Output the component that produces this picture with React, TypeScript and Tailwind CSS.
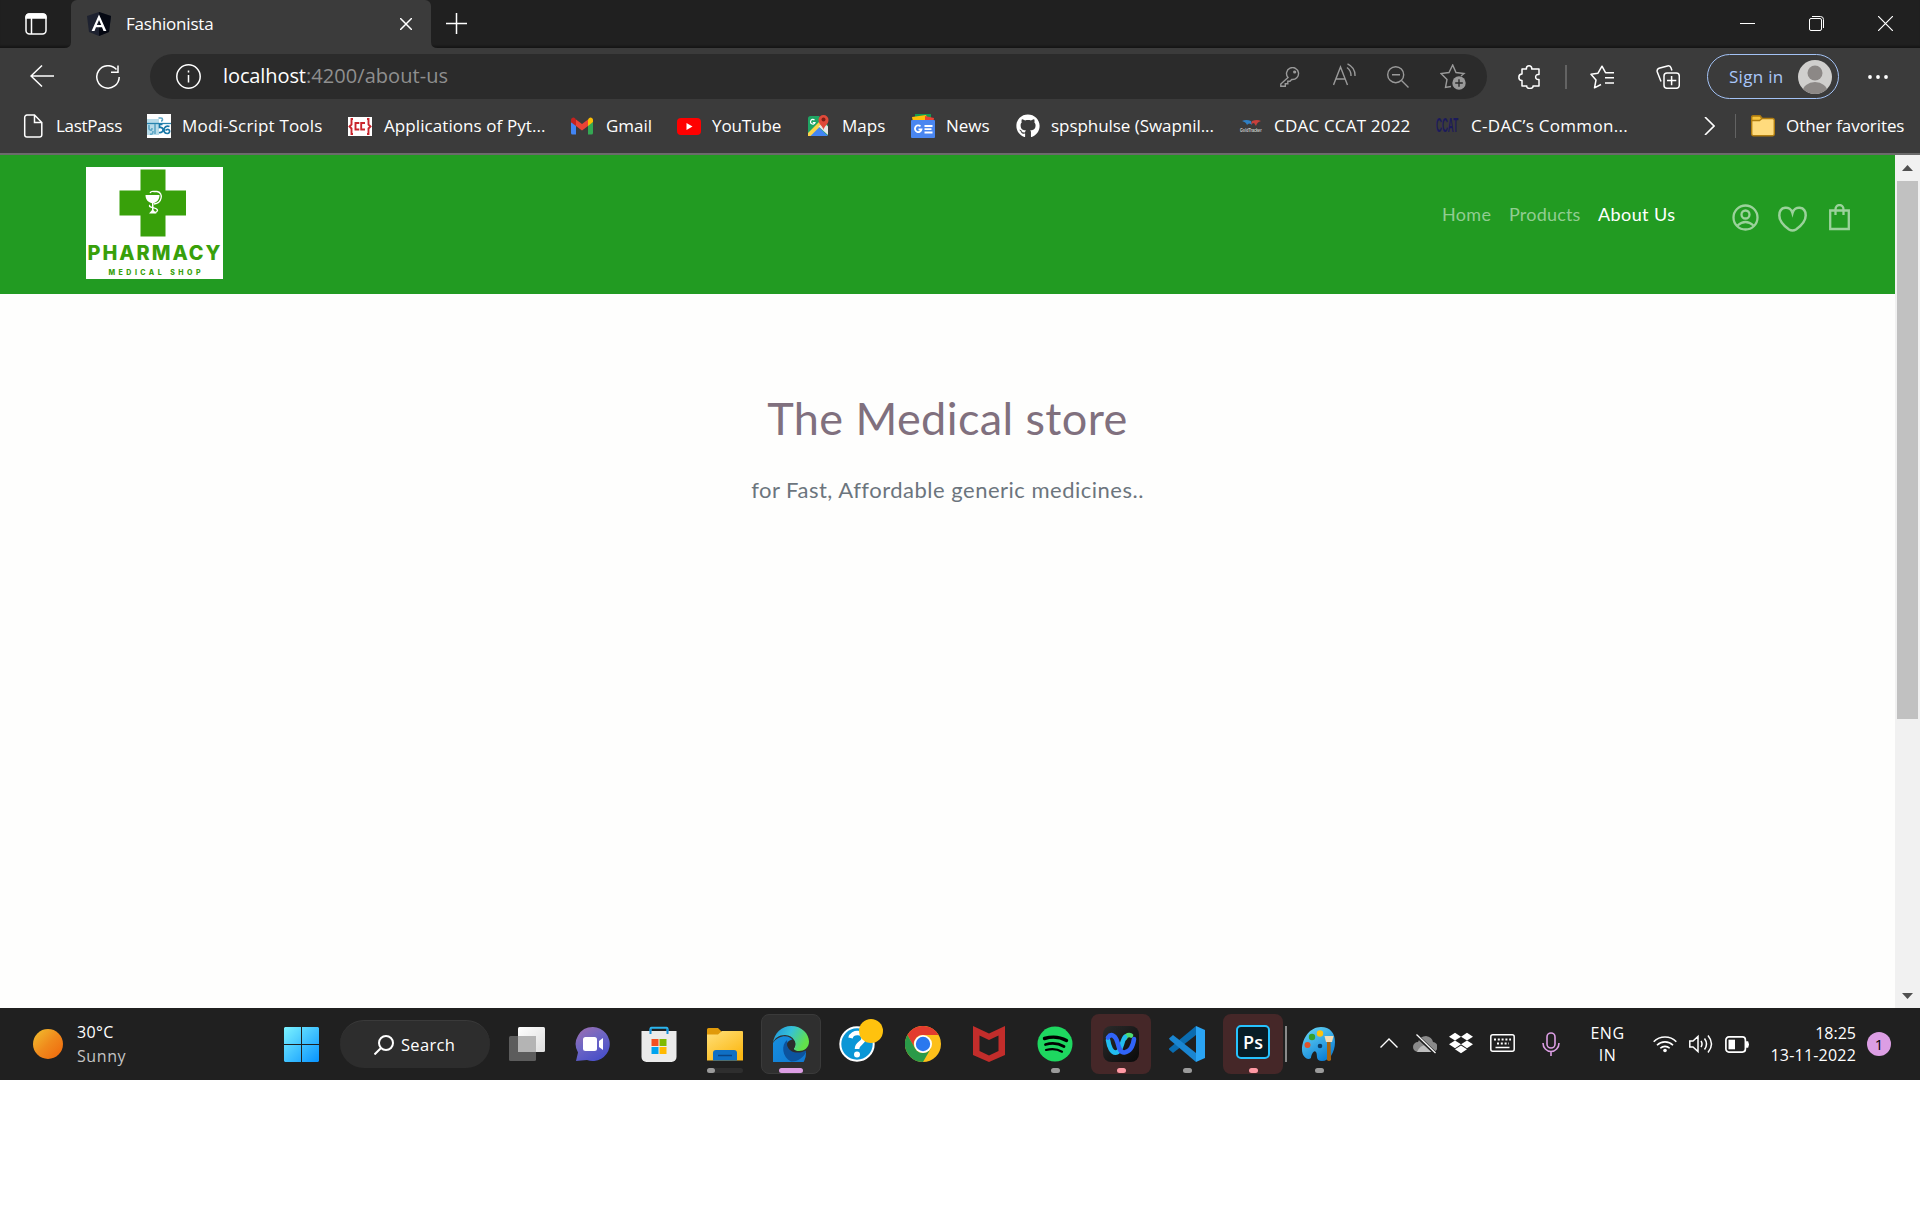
import { type ReactNode } from "react";
import { FaGithub, FaDropbox } from "react-icons/fa";

function Label({ children, className = "" }: { children: ReactNode; className?: string }) {
  return <span className={"block shrink-0 whitespace-nowrap " + className}>{children}</span>;
}

function TabStrip() {
  return (
    <div className="flex h-12 items-start bg-[#202020] shadow-[inset_0_-3px_2px_-1px_#161616]">
      <svg className="mt-[13px] ml-[25px] size-[22px] shrink-0" viewBox="0 0 22 22" fill="none" stroke="#fff" strokeWidth="1.5">
        <rect x="1" y="1" width="20" height="20" rx="3.5" />
        <path d="M1 5V4a3 3 0 0 1 3-3h14a3 3 0 0 1 3 3v1z" fill="#fff" />
        <path d="M6.500 5v16" />
      </svg>
      <svg className="ml-[17px] h-12 w-[7px] shrink-0" viewBox="0 0 7 48"><path d="M7 0v48H0q7 0 7-6z" fill="#3b3b3b" /></svg>
      <div className="flex h-12 w-[360px] shrink-0 items-center rounded-t-md bg-[#3b3b3b]">
        <svg className="ml-4 h-6 w-6 shrink-0" viewBox="0 0 24 24">
          <path d="M12 0 24 4l-2 16-10 4L2 20 0 4z" fill="#1e2230" />
          <path d="M12 0 24 4l-2 16-10 4z" fill="#050812" />
          <path d="M12 2.500 4.600 19h2.900l1.500-3.700h6L16.500 19h2.900zm0 5.500 2.200 5h-4.400z" fill="#fff" fillRule="evenodd" />
        </svg>
        <Label className="ml-[15px] w-[88px] text-[17px] tracking-[-0.2px] text-white">Fashionista</Label>
        <svg className="ml-[186px] size-3 shrink-0" viewBox="0 0 12 12" stroke="#fff" strokeWidth="1.500"><path d="M0 0l12 12M12 0 0 12" /></svg>
      </div>
      <svg className="h-12 w-[7px] shrink-0" viewBox="0 0 7 48"><path d="M0 0v48h7q-7 0-7-6z" fill="#3b3b3b" /></svg>
      <svg className="mt-[13px] ml-2 size-[21px] shrink-0" viewBox="0 0 21 21" stroke="#fff" strokeWidth="1.500"><path d="M0 10.500h21M10.500 0v21" /></svg>
      <div className="ml-auto flex items-center gap-[54px] pt-4 pr-[27px]">
        <svg className="size-[15px]" viewBox="0 0 15 15" stroke="#fff"><path d="M0 7.500h15" /></svg>
        <svg className="size-[15px]" viewBox="0 0 15 15" fill="none" stroke="#fff"><rect x=".5" y="2.500" width="12" height="12" rx="1.500" /><path d="M3 .5h8.500a3 3 0 0 1 3 3V12" /></svg>
        <svg className="size-[15px]" viewBox="0 0 15 15" stroke="#fff" strokeWidth="1.200"><path d="M0 0l15 15M15 0 0 15" /></svg>
      </div>
    </div>
  );
}

function Toolbar() {
  return (
    <div className="flex h-[57px] items-center">
      <svg className="mb-px ml-[30px] h-[22px] w-6 shrink-0" viewBox="0 0 24 22" fill="none" stroke="#fff" strokeWidth="1.500"><path d="M24 11H1M12 .5 1 11l11 10.500" /></svg>
      <svg className="ml-[42px] h-6 w-6 shrink-0" viewBox="0 0 24 24" fill="none" stroke="#fff" strokeWidth="1.500"><path d="M20.500 4.600A11.200 11.200 0 1 0 23.200 12M22 .5v6.800h-7" /></svg>
      <div className="ml-[30px] flex h-[45px] w-[1337px] shrink-0 items-center rounded-full bg-[#2b2b2b]">
        <svg className="ml-[26px] size-[25px] shrink-0" viewBox="0 0 25 25" fill="none" stroke="#fff" strokeWidth="1.500"><circle cx="12.500" cy="12.500" r="11.700" /><path d="M12.500 11v7.500M12.500 6.500v2" /></svg>
        <Label className="mb-0.5 ml-[22px] w-[83px] text-[20px] tracking-[-0.1px] text-white">localhost</Label>
        <Label className="mb-0.5 w-[142px] text-[20px] tracking-[0.05px] text-[#8f8f8f]">:4200/about-us</Label>
        <svg className="ml-[832px] size-5 shrink-0" viewBox="0 0 20 20" fill="none" stroke="#9a9a9a" strokeWidth="1.400"><path d="M8 10.500.8 17v2.300h4.500v-2.500h2.500v-2.500H10l1.700-1.800A6 6 0 1 0 8 10.500z" /><circle cx="14.700" cy="5" r=".9" fill="#9a9a9a" /></svg>
        <svg className="mb-1 ml-[33px] h-6 w-[23px] shrink-0" viewBox="0 0 23 24" fill="none" stroke="#9a9a9a" strokeWidth="1.400"><path d="M.5 22 7.500 4l7 18M3 16h9.500M14 4.500A10 10 0 0 1 18 13M14.500.8A13 13 0 0 1 22 13" /></svg>
        <svg className="ml-[31px] size-[22px] shrink-0" viewBox="0 0 22 22" fill="none" stroke="#9a9a9a" strokeWidth="1.400"><circle cx="8.700" cy="8.700" r="8" /><path d="M14.500 14.500 21.500 21.500M5 8.700h8" /></svg>
        <svg className="ml-[31px] h-[26px] w-[27px] shrink-0" viewBox="0 0 27 26" fill="none" stroke="#9a9a9a" strokeWidth="1.400"><path d="M11 22.500 5.500 23.500 7 15.500 1 9.500l8-1 3.700-7.500L16 8.500l8 1-3 2.500" /><circle cx="19" cy="19" r="6.700" fill="#9a9a9a" stroke="none" /><path d="M19 15.200v7.600M15.200 19h7.600" stroke="#2b2b2b" /></svg>
      </div>
      <svg className="ml-[31px] h-6 w-[23px] shrink-0" viewBox="0 0 23 24" fill="none" stroke="#fff" strokeWidth="1.500"><path d="M4 4h4.500C7.500-.2 14.500-.2 13.700 4H21v5.500c-4.500-1-4.500 6 0 5V21h-6c.6 3.300-7 3.300-6.200 0H4v-5.500c-4.200 0-4.200-6.500 0-6.500z" strokeLinejoin="round" /></svg>
      <div className="ml-6 h-6 w-0.5 shrink-0 bg-[#636363]" />
      <svg className="ml-[23px] h-6 w-6 shrink-0" viewBox="0 0 24 24" fill="none" stroke="#fff" strokeWidth="1.500" strokeLinejoin="round"><path d="M11 19.500 4.500 22.800 6 15 1 9.200l7-1L12 1.200l3.500 6.500H24M15 12.800h9M15 18h9" /></svg>
      <svg className="ml-[42px] h-6 w-6 shrink-0" viewBox="0 0 24 24" fill="none" stroke="#fff" strokeWidth="1.500"><path d="M5 16.500 1.300 7A3 3 0 0 1 3 3.300L11.500 1a3 3 0 0 1 3.600 2l.8 2.500" /><rect x="8" y="8" width="15.300" height="15.300" rx="3" /><path d="M15.600 11v9.300M11 15.600h9.300" /></svg>
      <div className="ml-[27px] flex h-[45px] w-[132px] shrink-0 items-center rounded-full border-[1.500px] border-[#a3c2f5]">
        <Label className="ml-[21px] w-[55px] text-[17px] tracking-[0.3px] text-[#a9c7fa]">Sign in</Label>
        <svg className="ml-[14px] size-[34px] shrink-0" viewBox="0 0 34 34"><clipPath id="av"><circle cx="17" cy="17" r="17" /></clipPath><g clipPath="url(#av)"><rect width="34" height="34" fill="#d0cfcd" /><circle cx="17" cy="13" r="7.500" fill="#8c8886" /><ellipse cx="17" cy="32" rx="12.500" ry="10" fill="#8c8886" /></g></svg>
      </div>
      <svg className="ml-[29px] h-1 w-5 shrink-0" viewBox="0 0 20 4" fill="#fff"><circle cx="2" cy="2" r="1.900" /><circle cx="10" cy="2" r="1.900" /><circle cx="18" cy="2" r="1.900" /></svg>
    </div>
  );
}

function Bookmark({ icon, gap, text, children }: { icon: ReactNode; gap: string; text: string; children: ReactNode }) {
  return (
    <div className={"flex shrink-0 items-center " + gap}>
      <div className="mr-3 size-6 shrink-0">{icon}</div>
      <Label className={"text-[17px] text-white " + text}>{children}</Label>
    </div>
  );
}

function BookmarksBar() {
  return (
    <div className="flex h-[42px] items-center">
      <Bookmark gap="ml-[21px]" text="-ml-px w-[66px] tracking-[-0.3px]" icon={<svg viewBox="0 0 24 24" fill="none" stroke="#fff" strokeWidth="1.500"><path d="M13.500 1H6a2.300 2.300 0 0 0-2.300 2.300v17.400A2.300 2.300 0 0 0 6 23h12.500a2.300 2.300 0 0 0 2.300-2.300V8.500zM13.500 1v7.500h7.300" /></svg>}>LastPass</Bookmark>
      <Bookmark gap="ml-[25px]" text="-ml-px w-[141px] tracking-[0.18px]" icon={
        <svg viewBox="0 0 24 24" fill="none"><rect width="24" height="24" fill="#fff" /><rect y="5" width="12" height="16" fill="#b7dbe9" /><path d="M0 9.500h24" stroke="#2683ae" strokeWidth="1.300" /><path d="M11.500 4h2.500a1.500 1.500 0 0 1 0 3M2 11v4q3 3 3-1M8 10v10M3 20q3 1 3-3" stroke="#5ba5c5" strokeWidth="1.600" /><path d="M15.500 10.500h-3v3c5-1 4.500 6-.5 5M22.500 12.500c-3-1.500-5.500 1-5.500 3.500s2 3.500 3.500 3.500 2.500-1.500 2-3-3-1.500-4 0" stroke="#1878a8" strokeWidth="1.700" /></svg>
      }>Modi-Script Tools</Bookmark>
      <Bookmark gap="ml-[25px]" text="w-[161px] tracking-[0.08px]" icon={
        <svg viewBox="0 0 24 24" fill="none" stroke="#c9252c" strokeWidth="1.900"><rect y="3" width="24" height="19" fill="#fff" stroke="none" /><path d="M5 5H3.500v5.500L1.500 12.500l2 2V20H5M19 5h1.500v5.500l2 2-2 2V20H19M11.300 9H7.500v6.500h3.800M17 9h-3.800v6.500H17" /></svg>
      }>Applications of Pyt...</Bookmark>
      <Bookmark gap="ml-[25px]" text="w-[46px]" icon={
        <svg viewBox="0 0 24 24"><path d="M1 8v11a1.500 1.500 0 0 0 1.500 1.500H6V10z" fill="#4285f4" /><path d="M18 10v10.500h3.500A1.500 1.500 0 0 0 23 19V8z" fill="#34a853" /><path d="M18 5.500V12l5-4V6c0-2-2.500-3.200-4-1.800z" fill="#fbbc04" /><path d="M6 5.500 12 10l6-4.500V12l-6 4.500L6 12z" fill="#ea4335" /><path d="M1 6v2.200l5 3.800V5.500L5 4.200C3.500 2.800 1 4 1 6z" fill="#c5221f" /></svg>
      }>Gmail</Bookmark>
      <Bookmark gap="ml-[25px]" text="-ml-px w-[69px] tracking-[-0.1px]" icon={<svg viewBox="0 0 24 24"><rect y="4" width="24" height="17" rx="4" fill="#f00" /><path d="M9.500 9v7l6-3.500z" fill="#fff" /></svg>}>YouTube</Bookmark>
      <Bookmark gap="ml-[25px]" text="w-[43px]" icon={
        <svg viewBox="0 0 24 24"><path d="M2 4.500A2.500 2.500 0 0 1 4.500 2H13l9 9v9a2 2 0 0 1-2 2H4a2 2 0 0 1-2-2z" fill="#1fa463" /><path d="M3 22 12 12.500 22 22z" fill="#4285f4" /><path d="M2 19 14 7l2.500 3L4.500 22H2z" fill="#fbd34a" /><path d="m12.500 12.500 5-4 4.500 4V21z" fill="#e8e8e8" /><path d="M17.500 16c-.5-4-5-5.500-5-10a5 5 0 0 1 10 0c0 4.500-4.500 6-5 10z" fill="#e04a3a" /><circle cx="17.500" cy="5.500" r="2" fill="#7d2018" /><path d="M8.500 6.200A2.300 2.300 0 1 0 9 8.500H6.800" fill="none" stroke="#fff" strokeWidth="1.200" /></svg>
      }>Maps</Bookmark>
      <Bookmark gap="ml-[26px]" text="-ml-px w-[44px]" icon={
        <svg viewBox="0 0 24 24"><path d="M4 0h16v8H4z" fill="#169b50" /><path d="m1 3 14-2 3 7H2z" fill="#ffc107" /><path d="m14 2 9 2-1 5h-8z" fill="#ea4335" /><rect y="6" width="24" height="18" rx="1" fill="#4a86f0" /><path d="M9.500 12.300a3.300 3.300 0 1 0 1 3H7.500M13.500 12h8M13.500 15.200h7M13.500 18.500h8" fill="none" stroke="#fff" strokeWidth="1.800" /></svg>
      }>News</Bookmark>
      <Bookmark gap="ml-[26px]" text="-ml-px w-[164px] tracking-[-0.05px]" icon={<FaGithub className="size-6 text-white" />}>spsphulse (Swapnil...</Bookmark>
      <Bookmark gap="ml-[24px]" text="-ml-px w-[137px] tracking-[0.2px]" icon={
        <svg viewBox="0 0 24 24"><path d="M3 7q4-2 9 0l1 4q-3-3-5 0-1-3-5-4z" fill="#2f7fc4" /><path d="M22 7q-4-2-9 0l-1 3 3-1 2 3q1-4 5-5z" fill="#c8403c" /><text transform="scale(1 1.400)" x="1" y="12.800" fontSize="3.700" fontWeight="bold" fill="#ccc" fontFamily="Liberation Sans">GoldTracker</text></svg>
      }>CDAC CCAT 2022</Bookmark>
      <Bookmark gap="ml-[25px]" text="-ml-px w-[158px] tracking-[0.3px]" icon={
        <svg viewBox="0 0 24 24"><text transform="scale(1 2.500)" x="0" y="7.300" fontSize="8.200" fontWeight="bold" fill="#1b1a5c" fontFamily="Liberation Sans">CCAT</text></svg>
      }>C-DAC’s Common...</Bookmark>
      <svg className="ml-[75px] h-[18px] w-[11px] shrink-0" viewBox="0 0 11 18" fill="none" stroke="#fff" strokeWidth="1.600"><path d="m1 0 9 9-9 9" /></svg>
      <div className="ml-5 h-6 w-px shrink-0 bg-[#636363]" />
      <Bookmark gap="ml-[15px]" text="-ml-px w-[118px] tracking-[-0.07px]" icon={
        <svg viewBox="0 0 24 24" stroke="#b07d10" strokeWidth="1.400"><path d="M.7 20V3.500A1.500 1.500 0 0 1 2.200 2H9l2 2.500h10.500A1.800 1.800 0 0 1 23.300 6v14a1.800 1.800 0 0 1-1.800 1.800h-19A1.800 1.800 0 0 1 .7 20z" fill="#ffdb7d" /><path d="M.7 6.500V3.500A1.500 1.500 0 0 1 2.200 2H9l2 2.500-2.500 2z" fill="#f5c33c" /></svg>
      }>Other favorites</Bookmark>
    </div>
  );
}

function PharmacyLogo() {
  return (
    <svg className="ml-[86px] h-[112px] w-[137px] shrink-0" viewBox="0 0 137 112">
      <rect width="137" height="112" fill="#fff" />
      <path d="M54.500 2.500h25V23.500h20.500v25H79.500V69.500h-25V48.500H33.500v-25h21z" fill="#38a00a" />
      <path d="M59.500 28h14c0 5-3 7.500-6 8.200V43l3 3.500h-7.500L66 43v-6.800c-3.500-.7-6.500-3.200-6.500-8.200z" fill="#fff" />
      <path d="M64 26q1-2 4-1.500h3c7 1 5 12-3 12.500M64 38c-3 3 8 2 7.500 5.500q-.5 2-3 2" fill="none" stroke="#fff" strokeWidth="1.300" />
      <text x="1.500" y="93" textLength="135" lengthAdjust="spacingAndGlyphs" fontFamily="Inter, sans-serif" fontWeight="800" fontSize="20" letterSpacing="2" fill="#38a00a">PHARMACY</text>
      <text x="22.500" y="107.500" textLength="92" fontFamily="Inter, sans-serif" fontWeight="800" fontSize="7" fill="#38a00a">MEDICAL SHOP</text>
    </svg>
  );
}

function SiteHeader() {
  return (
    <header className="flex h-[139px] items-start bg-[#229b22] pt-3 font-['Lato',sans-serif] text-[18px]">
      <PharmacyLogo />
      <nav className="mt-[34px] ml-[1219px] flex gap-[18px] leading-[26px] text-[#91cd91]">
        <Label className="w-[49px] tracking-[0.35px]">Home</Label>
        <Label className="w-[71px] tracking-[0.2px]">Products</Label>
        <Label className="w-[77px] tracking-[0.4px] text-white">About Us</Label>
      </nav>
      <div className="mt-[35px] ml-[57px] flex shrink-0 items-center text-[#9bd29b]">
        <svg className="size-[27px]" viewBox="0 0 27 27" fill="none" stroke="currentColor" strokeWidth="2.300"><circle cx="13.500" cy="13.500" r="12" /><circle cx="13.500" cy="10.500" r="4" /><path d="M5.500 21.500q8-7 16 0" /></svg>
        <svg className="mt-1 ml-[19px] h-[26px] w-[29px]" viewBox="0 0 29 26" fill="none" stroke="currentColor" strokeWidth="2.500"><path d="M14.500 7C12.500-.5 1.300-.3 1.300 9.500c0 6.500 6.200 11.500 9.700 14q3.500 2 7 0c3.500-2.500 9.700-7.500 9.700-14 0-9.800-11.200-10-13.200-2.500z" /></svg>
        <svg className="ml-[22px] h-[27px] w-[21px]" viewBox="0 0 21 27" fill="none" stroke="currentColor" strokeWidth="2.300"><path d="M1.200 6.500h18.600V25H1.200zM6.500 11V5.500a4 4.500 0 0 1 8 0V11" /></svg>
      </div>
    </header>
  );
}

function PageArea() {
  return (
    <div className="flex h-[853px]">
      <main className="w-[1895px] bg-[#fefefd]">
        <SiteHeader />
        <section className="flex flex-col items-center font-['Lato',sans-serif]">
          <h1 className="mt-[94px] text-[45px] leading-[60px] tracking-[0.4px] text-[#80707e]"><Label>The Medical store</Label></h1>
          <p className="mt-[26px] text-[22px] leading-8 tracking-[0.5px] text-[#6c757d]"><Label>for Fast, Affordable generic medicines..</Label></p>
        </section>
      </main>
      <div className="flex w-[25px] flex-col items-center bg-[#f1f1f1]">
        <svg className="mt-[10px] h-[6px] w-[11px]" viewBox="0 0 11 6"><path d="M5.500 0 11 6H0z" fill="#505050" /></svg>
        <div className="mt-[10px] h-[538px] w-[21px] bg-[#c1c1c1]" />
        <svg className="mt-auto mb-[9px] h-[6px] w-[11px]" viewBox="0 0 11 6"><path d="M5.500 6 0 0h11z" fill="#505050" /></svg>
      </div>
    </div>
  );
}

function App({ children, box = "", mark }: { children: ReactNode; box?: string; mark?: ReactNode }) {
  return (
    <div className="flex h-[72px] w-[66px] shrink-0 items-center justify-center">
      <div className={"relative flex size-[60px] items-center justify-center rounded-lg " + box}>
        {children}
        {mark}
      </div>
    </div>
  );
}
const dot = <span className="absolute bottom-[1px] h-[5px] w-[9px] rounded-full bg-[#9b9b9b]" />;
const pinkDot = <span className="absolute bottom-[1px] h-[5px] w-[9px] rounded-full bg-[#ff99a4]" />;

function TaskApps() {
  return (
    <div className="ml-1 flex shrink-0">
      <App>
        <svg className="size-9" viewBox="0 0 36 36"><defs><linearGradient id="tv" x2="1" y2="1"><stop stopColor="#fff" /><stop offset="1" stopColor="#ddd" /></linearGradient></defs><rect x="9" y="1" width="27" height="25" rx="1.500" fill="url(#tv)" /><rect y="10" width="27" height="25" rx="1.500" fill="#5c5c5c" /><path d="M9 10h18v16H9z" fill="#b4b4b4" /></svg>
      </App>
      <App>
        <svg className="size-9" viewBox="0 0 36 36"><defs><linearGradient id="ch" x2=".6" y2="1"><stop stopColor="#a06fae" /><stop offset=".5" stopColor="#6f66c4" /><stop offset="1" stopColor="#4a50c8" /></linearGradient></defs><path d="M18 1a17 17 0 1 1-6 33L1 35l2-8.500A17 17 0 0 1 18 1z" fill="url(#ch)" /><rect x="8" y="11" width="14" height="14" rx="2.500" fill="#fff" /><path d="m24 15 4-3v12l-4-3z" fill="#fff" /></svg>
      </App>
      <App>
        <svg className="size-9" viewBox="0 0 36 36"><path d="M9.500 8V3a1 1 0 0 1 1-1.200h15a1 1 0 0 1 1 1.200v5" fill="none" stroke="#2bb5ee" strokeWidth="2" /><path d="M.5 5h35v26a5 5 0 0 1-5 5h-25a5 5 0 0 1-5-5z" fill="#ebebeb" /><path d="M9.500 8V3M26.500 8V3" stroke="#1490d8" strokeWidth="2" /><path d="M10.500 13h7v7h-7z" fill="#f25022" /><path d="M18.500 13h7v7h-7z" fill="#7fba00" /><path d="M10.500 21h7v7h-7z" fill="#00a4ef" /><path d="M18.500 21h7v7h-7z" fill="#ffb900" /></svg>
      </App>
      <App mark={<span className="absolute bottom-[1px] flex h-[5px] w-9 rounded-full bg-[#2e2e2e]"><span className="h-full w-2 rounded-full bg-[#9b9b9b]" /></span>}>
        <svg className="size-9" viewBox="0 0 36 36"><defs><linearGradient id="fo" x2=".7" y2="1"><stop stopColor="#ffe07a" /><stop offset="1" stopColor="#fcb813" /></linearGradient></defs><path d="M0 3.500A1.500 1.500 0 0 1 1.500 2H11l4 4v6H0z" fill="#e09a0a" /><path d="M0 8.500h11L15 5h20a1 1 0 0 1 1 1v28.500H0z" fill="url(#fo)" /><path d="M6 34.500V27a3 3 0 0 1 3-3h18a3 3 0 0 1 3 3v7.500z" fill="#0f6fc4" /><path d="M11 29.500h14" stroke="#0a4484" strokeWidth="1.500" /></svg>
      </App>
      <App box="bg-[#2f2f2f] border border-[#3a3a3a]" mark={<span className="absolute bottom-0 h-[5px] w-6 rounded-full bg-[#dc9ee4]" />}>
        <svg className="size-9" viewBox="0 0 36 36"><defs><linearGradient id="e1" x2="1" y2=".4"><stop stopColor="#1d8fdc" /><stop offset=".5" stopColor="#35c1d8" /><stop offset="1" stopColor="#62e04a" /></linearGradient><linearGradient id="e2" y2="1"><stop stopColor="#1790e0" /><stop offset="1" stopColor="#0f74cf" /></linearGradient></defs>
          <path d="M33 26A18 18 0 1 1 0 17C5 9 17 8 20 15c-7-1-8 6-6 9 4 6 12 5 19 2z" fill="url(#e2)" />
          <path d="M14 14c-6 5-5 17 4 21.500C25 36 31 31 33 26c.5-1-.5-1.500-1.500-1-6 3-15 2-17-5-.5-2 0-4.500-.5-6z" fill="#0c539e" />
          <path d="M0 17C1 7 9 0 18 0c11 0 18 8 18 15.500C36 22 31 25 26 25c-5 0-6-2-4.500-3.500C24 18 21 9 12 9 6 9 1.500 12 0 17z" fill="url(#e1)" />
          <path d="M14.500 20c-1-4 2-6.500 5.500-6.200 2.500 1 3 4.500 1.500 7.700-1.500 1.500-.5 3.500 4.500 3.500-5 1.500-10-.5-11.500-5z" fill="#2b2b2d" />
        </svg>
      </App>
      <App mark={<span className="absolute top-[5px] right-[4px] size-6 rounded-full bg-[#ffc20e]" />}>
        <svg className="size-9" viewBox="0 0 36 36"><circle cx="18" cy="18" r="16.700" fill="#0a96d6" stroke="#fff" strokeWidth="2" /><path d="M11.500 12c1.500-7 14-6.500 13 1-.5 4.500-6.500 4-6.500 10" fill="none" stroke="#fff" strokeWidth="4.500" /><circle cx="18" cy="28.500" r="3" fill="#fff" /></svg>
      </App>
      <App>
        <svg className="size-9" viewBox="0 0 36 36"><circle cx="18" cy="18" r="18" fill="#fdc01a" /><path d="M2.400 9A18 18 0 0 1 33.600 9H18a9 9 0 0 0-8 13.500z" fill="#e33b2e" /><path d="M2.400 9A18 18 0 0 0 18 36l7.800-13.500a9 9 0 0 1-15.600 0z" fill="#2a9a48" /><circle cx="18" cy="18" r="9" fill="#fff" /><circle cx="18" cy="18" r="7.200" fill="#2a78ee" /></svg>
      </App>
      <App><svg className="size-9" viewBox="0 0 36 36"><path d="m2 0 16 7.500L34 0v29l-16 7-16-7zm6.500 9.500V25l9.500 4.500 9.500-4.500V9.500L18 14z" fill="#c22d2b" fillRule="evenodd" /></svg></App>
      <App mark={dot}>
        <svg className="size-9" viewBox="0 0 36 36"><circle cx="18" cy="18" r="17.500" fill="#1ed760" /><g fill="none" stroke="#000" strokeLinecap="round"><path d="M7.500 12.500q12-3.500 22 2" strokeWidth="3.400" /><path d="M8.500 18.500q10-3 18.500 2" strokeWidth="2.800" /><path d="M9 24q9-2.500 16 1.700" strokeWidth="2.200" /></g></svg>
      </App>
      <App box="bg-[#452728]" mark={pinkDot}>
        <svg className="size-9" viewBox="0 0 36 36"><defs><linearGradient id="wb" y2="1"><stop stopColor="#2b2b2b" /><stop offset="1" stopColor="#0a0a0a" /></linearGradient></defs><rect width="36" height="36" rx="8" fill="url(#wb)" /><g fill="none" strokeWidth="4.600" strokeLinecap="round"><path d="M22 12c1.500-3 4-3.500 6-2.500" stroke="#4fdc72" /><path d="M22 11c-3.500 4-3 14-8.500 15.500-5 1-7.500-6-8.500-12.500" stroke="#22bdf0" /><path d="M5 11.500c3.500-5 8-1 9.500 5s3 10.500 7 10c5.500-1 8.500-6 9.500-13.500" stroke="#3064f8" /></g></svg>
      </App>
      <App mark={dot}>
        <svg className="size-9" viewBox="0 0 36 36"><path d="M0 23.500 4 27 27 9V0L0 22.500z" fill="#0a6cb0" /><path d="M0 12.500 4 9l23 18v9L1 14z" fill="#1a86d2" /><path d="m27 0 9 4v28l-9 4z" fill="#2aa4f4" /></svg>
      </App>
      <App box="bg-[#452728]" mark={pinkDot}>
        <div className="-mt-1 flex size-[34px] items-center justify-center rounded-[5px] border-2 border-[#26c3ff] bg-[#071d27] text-[18px] leading-none font-semibold text-white">Ps</div>
      </App>
      <App mark={<>{dot}<span className="absolute left-[-4px] h-9 w-0.5 bg-[#8a8a8a]" /></>}>
        <svg className="size-9" viewBox="0 0 36 36"><defs><linearGradient id="pa" x2=".6" y2="1"><stop stopColor="#6ddcf8" /><stop offset="1" stopColor="#0d80d6" /></linearGradient></defs><path d="M1 24C1 12 9 1 20 1c9 0 14 6 14 15 0 11-6 19-13 19-7 0-4-6-6-9s-5 3-5 6c-4 3-9-2-9-8z" fill="url(#pa)" /><circle cx="19" cy="20" r="2.300" fill="#0b3d66" /><circle cx="6.500" cy="19" r="3" fill="#e0532a" /><circle cx="11" cy="11" r="3.200" fill="#35a02c" /><circle cx="19" cy="7.500" r="3.200" fill="#ffc20e" /><path d="M23.500 10h9l-1.500 6h-6z" fill="#f3dcb6" /><path d="M26 16h3.500l.5 18q-2 2-4 0z" fill="#a8640f" /></svg>
      </App>
    </div>
  );
}

function Taskbar() {
  return (
    <div className="flex h-[72px] items-center bg-[#202020] text-[16px] text-white">
      <div className="ml-[33px] size-[30px] shrink-0 rounded-full bg-linear-to-br from-[#efc02f] via-[#f08a1c] to-[#ee6409]" />
      <div className="ml-[14px] w-[51px] shrink-0 leading-6">
        <Label className="tracking-[0.4px]">30°C</Label>
        <Label className="tracking-[0.6px] text-[#c4c4c4]">Sunny</Label>
      </div>
      <svg className="ml-[156px] size-[35px] shrink-0" viewBox="0 0 35 35"><defs><linearGradient id="wn" gradientUnits="userSpaceOnUse" x1="0" y1="0" x2="35" y2="35"><stop stopColor="#7cf3ff" /><stop offset="1" stopColor="#0793ff" /></linearGradient></defs><path d="M1 0h16v17H0V1zM18 0h16l1 1v16H18zM0 18h17v17H1l-1-1zM18 18h17v16l-1 1H18z" fill="url(#wn)" /></svg>
      <div className="ml-[21px] flex h-12 w-[150px] shrink-0 items-center rounded-full border-t border-[#3a3a3a] bg-[#2d2d2d]">
        <svg className="ml-[34px] size-5 shrink-0" viewBox="0 0 20 20" fill="none" stroke="#fff" strokeWidth="2"><circle cx="12" cy="8" r="7" /><path d="m7 13-6.500 6.500" /></svg>
        <Label className="ml-[7px] w-[55px] pt-px text-[16.500px] tracking-[0.3px]">Search</Label>
      </div>
      <TaskApps />
      <svg className="mb-0.5 ml-[28px] h-[10px] w-[18px] shrink-0" viewBox="0 0 18 10" fill="none" stroke="#fff" strokeWidth="1.400"><path d="m.5 9.500 8.500-8.500 8.500 8.500" /></svg>
      <svg className="ml-[15px] h-[20px] w-6 shrink-0" viewBox="0 0 24 20"><path d="M5 18a5 5 0 0 1 0-10Q7 2 13 2q6 1 7 6a5 5 0 0 1-1 10z" fill="#8a8a8a" /><path d="M4 18q3-7 9-7t9 7z" fill="#bdbdbd" /><path d="m3 1 19 18" stroke="#202020" strokeWidth="3.500" /><path d="m3.500.5 19 18.500" stroke="#fff" strokeWidth="1.200" /></svg>
      <FaDropbox className="mb-0.5 ml-3 size-6 shrink-0" />
      <svg className="mb-0.5 ml-[17px] h-[18px] w-[25px] shrink-0" viewBox="0 0 25 18" fill="none" stroke="#fff" strokeWidth="1.500"><rect x=".8" y=".8" width="23.400" height="16.400" rx="2" /><path d="M4 5.500h17" strokeDasharray="2 1.800" strokeWidth="1.800" /><path d="M7 9.500h12" strokeDasharray="2 1.800" strokeWidth="1.800" /><path d="M5.500 13.500h14" /></svg>
      <svg className="ml-[27px] h-6 w-[18px] shrink-0" viewBox="0 0 18 24" fill="none" stroke="#dc9ee4" strokeWidth="1.600"><rect x="5" y="1" width="8" height="15" rx="4" /><path d="M1 11a8 8.500 0 0 0 16 0M9 19.500V24" /></svg>
      <div className="ml-[30px] w-[35px] shrink-0 text-center leading-[22px]"><Label className="tracking-[0.5px]">ENG</Label><Label className="tracking-[0.5px]">IN</Label></div>
      <svg className="ml-[28px] h-[18px] w-6 shrink-0" viewBox="0 0 24 18" fill="none" stroke="#fff" strokeWidth="1.600"><path d="M.7 6.700a16 16 0 0 1 22.600 0M4 10.200a11.300 11.300 0 0 1 16 0M7.300 13.300a6.700 6.700 0 0 1 9.400 0" /><circle cx="12" cy="15.500" r="1.800" fill="#fff" stroke="none" /></svg>
      <svg className="ml-3 h-5 w-6 shrink-0" viewBox="0 0 24 20" fill="none" stroke="#fff" strokeWidth="1.500"><path d="M.8 7v6H4l5 4.500v-15L4 7zM12 7q2 3 0 6M15.500 4.500q4 5.500 0 11M19 1.500q7 8.500 0 17" /></svg>
      <svg className="ml-3 h-[17px] w-6 shrink-0" viewBox="0 0 24 17" fill="none" stroke="#fff" strokeWidth="1.700"><rect x=".9" y=".9" width="19.500" height="15.200" rx="3" /><path d="M3.500 3.700h6.500v9.600H3.500z" fill="#fff" stroke="none" /><path d="M21 6h1.500l.7 2.500-.7 2.500H21z" fill="#fff" /></svg>
      <div className="ml-[21px] flex w-[86px] shrink-0 flex-col items-end pb-px leading-[22px]"><Label>18:25</Label><Label className="tracking-[0.2px]">13-11-2022</Label></div>
      <div className="ml-[11px] flex size-6 shrink-0 items-center justify-center rounded-full bg-[#dc9ee4] text-[15px] text-black">1</div>
    </div>
  );
}

export default function Desktop() {
  return (
    <div className="h-[1214px] w-[1920px] overflow-hidden bg-white font-['Open_Sans',sans-serif]">
      <TabStrip />
      <div className="h-[107px] border-b-2 border-[#6b6b6b] bg-[#3b3b3b]">
        <Toolbar />
        <BookmarksBar />
      </div>
      <PageArea />
      <Taskbar />
    </div>
  );
}
